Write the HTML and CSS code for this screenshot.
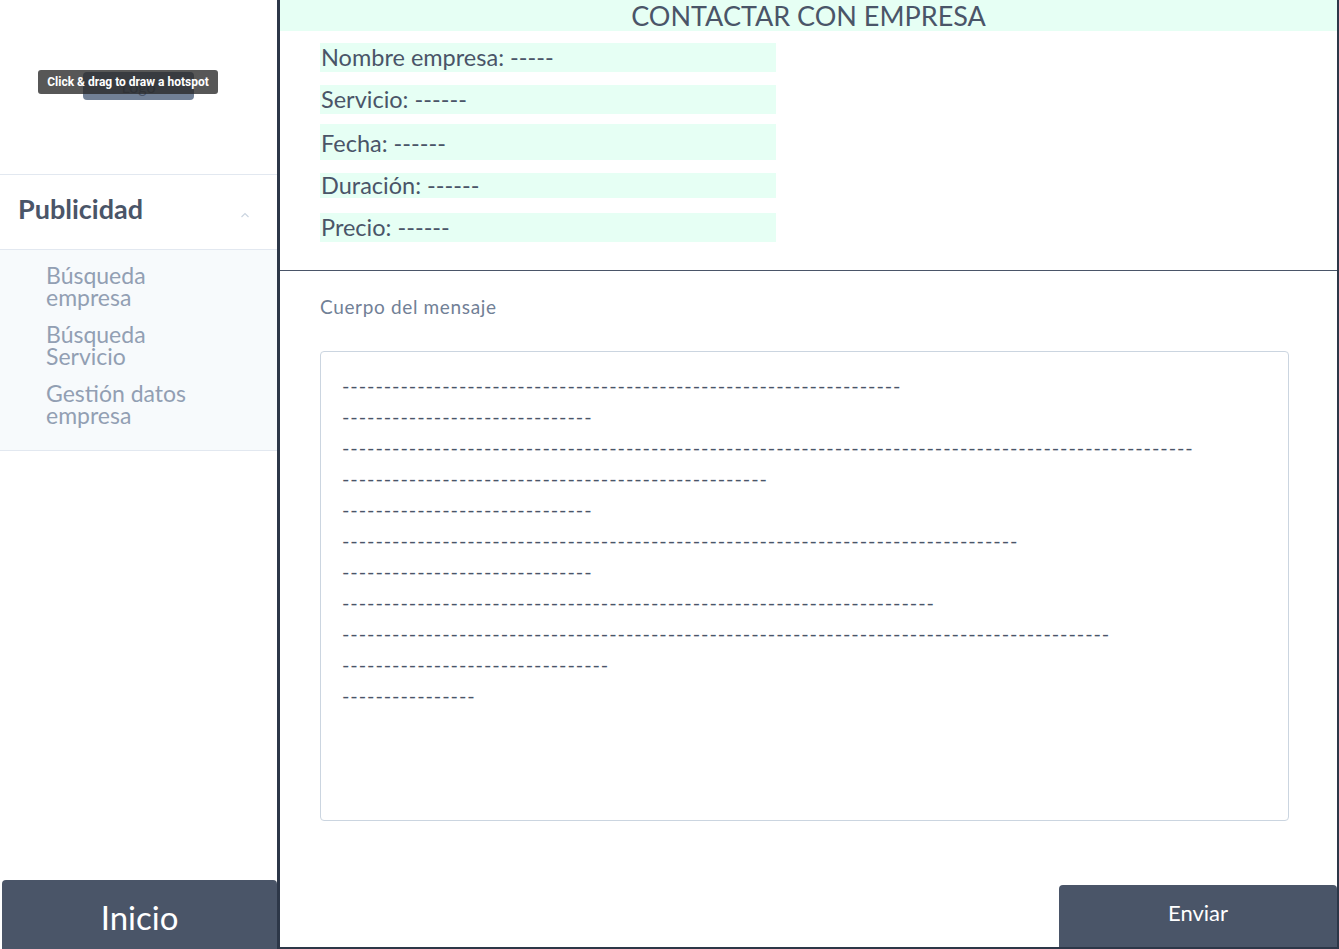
FILE: index.html
```html
<!DOCTYPE html>
<html lang="es">
<head>
<meta charset="utf-8">
<title>Contactar con empresa</title>
<link rel="stylesheet" href="styles.css">
</head>
<body>
<div class="app">
  <aside class="sidebar">
    <div class="logo-area">
      <div class="logo-wrap">
        <button class="logo-btn">Logo</button>
        <div class="tooltip">Click &amp; drag to draw a hotspot</div>
      </div>
    </div>
    <div class="menu-head">
      <span class="menu-title">Publicidad</span>
      <svg class="chev" width="10" height="6" viewBox="0 0 10 6"><path d="M1.5 5 L5 1.5 L8.5 5" fill="none" stroke="#cbd5e0" stroke-width="1.2"/></svg>
    </div>
    <ul class="submenu">
      <li>Búsqueda<br>empresa</li>
      <li>Búsqueda<br>Servicio</li>
      <li class="gap">Gestión datos<br>empresa</li>
    </ul>
    <div class="spacer"></div>
    <button class="inicio">Inicio</button>
  </aside>
  <main class="main">
    <h1 class="title">CONTACTAR CON EMPRESA</h1>
    <section class="fields">
      <div class="field">Nombre empresa: -----</div>
      <div class="field">Servicio: ------</div>
      <div class="field tall">Fecha: ------</div>
      <div class="field short">Duración: ------</div>
      <div class="field">Precio: ------</div>
    </section>
    <section class="message">
      <label class="msg-label">Cuerpo del mensaje</label>
      <div class="msg-box">
<div class="dl">-------------------------------------------------------------------</div>
<div class="dl">------------------------------</div>
<div class="dl">------------------------------------------------------------------------------------------------------</div>
<div class="dl">---------------------------------------------------</div>
<div class="dl">------------------------------</div>
<div class="dl">---------------------------------------------------------------------------------</div>
<div class="dl">------------------------------</div>
<div class="dl">-----------------------------------------------------------------------</div>
<div class="dl">--------------------------------------------------------------------------------------------</div>
<div class="dl">--------------------------------</div>
<div class="dl">----------------</div>
      </div>
    </section>
    <div class="actions">
      <button class="enviar">Enviar</button>
    </div>
  </main>
</div>
</body>
</html>
```

FILE: styles.css
```css
* { box-sizing: border-box; }
html, body { margin: 0; padding: 0; }
body {
  font-family: Lato, "Noto Sans", sans-serif;
  color: #4a5568;
  background: #fff;
  width: 1339px;
  height: 949px;
  overflow: hidden;
}
.app {
  display: flex;
  height: 949px;
}
.sidebar {
  width: 280px;
  flex: 0 0 280px;
  border-right: 3px solid #2d3748;
  display: flex;
  flex-direction: column;
  background: #fff;
}
.logo-area {
  height: 175px;
  border-bottom: 1px solid #e2e8f0;
  display: flex;
  justify-content: flex-start;
  padding: 72px 0 0 83px;
}
.logo-wrap {
  position: relative;
  height: 28px;
}
.logo-btn {
  width: 111px;
  height: 28px;
  border: none;
  border-radius: 4px;
  background: #718096;
  color: #4a5568;
  font-family: Lato, sans-serif;
  font-size: 16px;
  padding: 0;
}
.tooltip {
  position: absolute;
  left: -45px;
  top: -2px;
  width: 180px;
  height: 24px;
  background: rgba(40, 40, 40, 0.78);
  color: #fff;
  border-radius: 3px;
  font-family: Roboto, "Liberation Sans", sans-serif;
  font-weight: 700;
  font-size: 12px;
  line-height: 24px;
  text-align: center;
  white-space: nowrap;
}
.menu-head {
  height: 75px;
  border-bottom: 1px solid #e2e8f0;
  display: flex;
  align-items: center;
  justify-content: space-between;
  padding: 0 27px 0 18px;
}
.menu-title {
  font-size: 27px;
  font-weight: 700;
  color: #4a5568;
  margin-top: -8px;
}
.chev { margin-top: 6px; }
.submenu {
  list-style: none;
  margin: 0;
  padding: 14px 0 24px 46px;
  background: #f7fafc;
  border-bottom: 1px solid #e2e8f0;
}
.submenu li {
  font-size: 23px;
  line-height: 22px;
  color: #929fb3;
  margin-bottom: 15px;
}
.submenu li.gap { margin-top: 10px; margin-bottom: 0; }
.spacer { flex: 1; }
.inicio {
  margin-left: 2px;
  width: 275px;
  height: 69px;
  border: none;
  border-radius: 4px 4px 0 0;
  background: #4a5568;
  color: #fff;
  font-family: Lato, sans-serif;
  font-size: 33px;
  padding: 4px 0 0;
}
.main {
  flex: 1;
  min-width: 0;
  display: flex;
  flex-direction: column;
  border-right: 2px solid #2d3748;
  border-bottom: 2px solid #2d3748;
}
.title {
  margin: 0;
  height: 31px;
  background: #e6fff4;
  text-align: center;
  font-size: 27px;
  font-weight: 400;
  line-height: 31px;
  color: #4a5568;
}
.fields {
  padding: 12px 0 0 40px;
  height: 240px;
  border-bottom: 1px solid #4a5568;
}
.field {
  width: 456px;
  height: 29px;
  background: #e6fff4;
  font-size: 23.5px;
  line-height: 29px;
  margin-bottom: 13px;
  padding-left: 1px;
}
.field.tall { height: 36px; line-height: 38px; margin-top: -3px; margin-bottom: 13px; }
.field.short { height: 25px; line-height: 25px; margin-bottom: 15px; }
.message {
  padding: 24px 48px 0 40px;
}
.msg-label {
  display: block;
  font-size: 19px;
  letter-spacing: 0.65px;
  color: #718096;
  margin-bottom: 33px;
}
.msg-box {
  height: 470px;
  border: 1px solid #cbd5e0;
  border-radius: 4px;
  padding: 18px 0 0 21px;
  overflow: hidden;
}
.dl {
  font-size: 20px;
  line-height: 31px;
  color: #4a5568;
  letter-spacing: 0.92px;
  white-space: nowrap;
}
.actions {
  flex: 1;
  display: flex;
  justify-content: flex-end;
  align-items: flex-end;
}
.enviar {
  width: 278px;
  height: 62px;
  border: none;
  border-radius: 4px 4px 0 0;
  background: #4a5568;
  color: #fff;
  font-family: Lato, sans-serif;
  font-size: 22px;
  padding: 0 0 8px;
}
```
